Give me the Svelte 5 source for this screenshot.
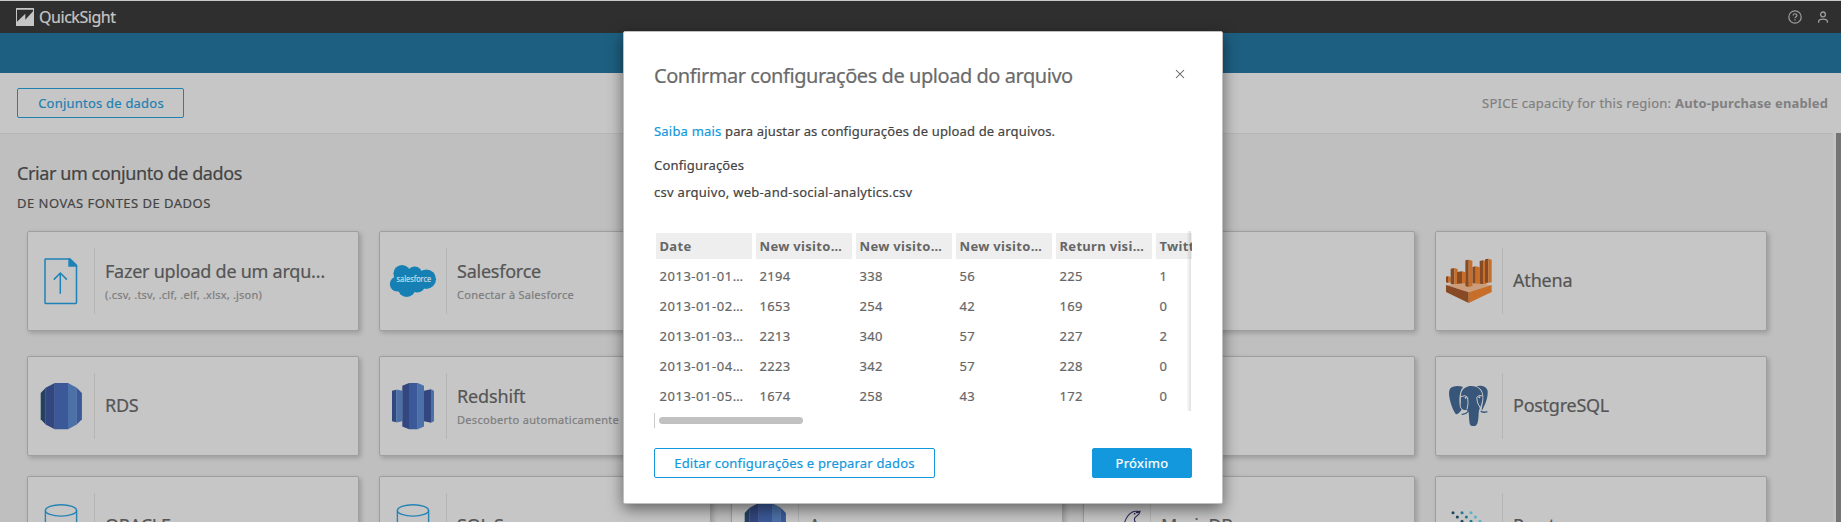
<script>
  const sources = [
    { name: 'Fazer upload de um arqu…', sub: '(.csv, .tsv, .clf, .elf, .xlsx, .json)', icon: 'upload', ls: -0.245, subLs: 0.21 },
    { name: 'Salesforce', sub: 'Conectar à Salesforce', icon: 'salesforce', ls: -0.24, subLs: 0.275 },
    { name: '' },
    { name: '' },
    { name: 'Athena', icon: 'athena', ls: -0.17 },
    { name: 'RDS', icon: 'rds', ls: -0.24 },
    { name: 'Redshift', sub: 'Descoberto automaticamente', icon: 'redshift', ls: -0.13, subLs: 0.3 },
    { name: '' },
    { name: '' },
    { name: 'PostgreSQL', icon: 'postgres', ls: -0.26 },
    { name: 'ORACLE', icon: 'database', ls: -0.24 },
    { name: 'SQL Server', icon: 'database', ls: -0.24 },
    { name: 'Aurora', icon: 'rds', ls: -0.24 },
    { name: 'MariaDB', icon: 'mariadb', ls: -0.24 },
    { name: 'Presto', icon: 'presto', ls: -0.24 }
  ];

  const columns = ['Date', 'New visito…', 'New visito…', 'New visito…', 'Return visi…', 'Twitter'];
  const rows = [
    ['2013-01-01…', '2194', '338', '56', '225', '1'],
    ['2013-01-02…', '1653', '254', '42', '169', '0'],
    ['2013-01-03…', '2213', '340', '57', '227', '2'],
    ['2013-01-04…', '2223', '342', '57', '228', '0'],
    ['2013-01-05…', '1674', '258', '43', '172', '0']
  ];

  const dots = [
    [700, 878, '#1e4560'], [727, 878, '#1a7a92'], [754, 878, '#5bb0c6'],
    [713, 891, '#1e4560'], [740, 891, '#1a7a92'], [767, 891, '#5bb0c6'],
    [727, 904, '#1e4560'], [754, 904, '#1a7a92'], [781, 904, '#5bb0c6']
  ];

  // x start, dark/light split, x end, top, bottom
  const bars = [
    [679, 685, 693, 168, 187],
    [693, 704, 714, 144, 192],
    [712, 727, 737, 154, 196],
    [758, 768, 780, 139, 195],
    [737, 747, 758, 119, 200],
    [780, 790, 802, 121, 191],
    [796, 806, 816, 116, 187]
  ];
</script>

<div class="page">
  <header class="top">
    <svg class="logo" viewBox="0 0 54 54">
      <rect width="54" height="54" rx="1.5" fill="#c6c6c6" />
      <path d="M3 5.5H51V10L28 35V17L3 41Z" fill="#2f2f2f" />
    </svg>
    <span class="brand">QuickSight</span>
    <div class="tools">
      <svg width="16" height="16" viewBox="0 0 16 16" fill="none" stroke="#9c9c9c" stroke-width="1.2">
        <circle cx="8" cy="8" r="6.2" />
        <path d="M6.1 6.5C6.1 4.2 9.9 4.2 9.9 6.4C9.9 7.7 8 7.7 8 9.2M8 10.2V11.4" />
      </svg>
      <svg width="16" height="16" viewBox="0 0 16 16" fill="none" stroke="#9c9c9c" stroke-width="1.3">
        <circle cx="8" cy="5.4" r="2.4" />
        <path d="M3.6 13.8V12.6C3.6 9.3 12.4 9.3 12.4 12.6V13.8" />
      </svg>
    </div>
  </header>
  <div class="band"></div>
  <div class="toolbar">
    <button class="outline muted">Conjuntos de dados</button>
    <div class="capacity"><span>SPICE capacity for this region:</span> <b>Auto-purchase enabled</b></div>
  </div>
  <div class="body">
    <main>
      <h1>Criar um conjunto de dados</h1>
      <h2>DE NOVAS FONTES DE DADOS</h2>
      <div class="grid">
        {#each sources as s}
          <div class="card">
            <svg class="icon" width="66" height="98" viewBox="1 1 66 98">
              {#if s.icon === 'upload'}
                <g fill="none" stroke="#1f82b6" stroke-width="1.5">
                  <path d="M43.5 28H18.6Q18 28 18 28.6V71.4Q18 72.6 19 72.6H48.6Q49.5 72.6 49.5 71.6V34" />
                  <path d="M33.3 62.8V42M26.8 48.6L33.3 42L39.9 48.6" />
                </g>
                <path d="M41.3 27.4H43.6L50.1 33.7V35.7H41.3Z" fill="#1f82b6" />
              {:else if s.icon === 'salesforce'}
                <g fill="#1680b4">
                  <circle cx="23" cy="42.5" r="8.6" /><circle cx="35.7" cy="43" r="7.6" />
                  <circle cx="47.3" cy="48.2" r="9.7" /><circle cx="18.2" cy="53" r="7.4" />
                  <circle cx="27.7" cy="57" r="9" /><circle cx="38" cy="53.4" r="8.2" />
                  <rect x="18" y="42" width="28" height="15" />
                </g>
                <text x="17.6" y="51" font-size="8.6" textLength="34.5" lengthAdjust="spacingAndGlyphs" fill="#c6dde6" stroke="#c6dde6" stroke-width="0.2">salesforce</text>
              {:else if s.icon === 'athena'}
                <g transform="translate(-215.3 -11) scale(.33333)">
                  {#each bars as [x0, xm, x1, t, b]}
                    <path d="M{x0} {t + 2}L{xm} {t}V{b + 2}L{x0} {b}Z" fill="#884a24" />
                    <path d="M{xm} {t}L{x1} {t + 3}V{b}L{xm} {b + 2}Z" fill="#c76f29" />
                  {/each}
                  <path d="M679 195L747 188L816 195L747 217Z" fill="#cb9d7a" />
                  <path d="M737 186H747V201L737 198Z" fill="#884a24" />
                  <path d="M747 186H758V198L747 201Z" fill="#c76f29" />
                  <path d="M679 195L747 217V249L679 216Z" fill="#884a24" />
                  <path d="M816 195L747 217V249L816 216Z" fill="#c76f29" />
                </g>
              {:else if s.icon === 'rds'}
                <path d="M13.7 37L18.7 31.7V68.6L13.7 63.3Z" fill="#264060" />
                <path d="M18.6 31.8L27.8 27V73.3L18.6 68.5Z" fill="#32477f" />
                <path d="M27.7 27H41.1V73.3H27.7Z" fill="#3b5998" />
                <path d="M41 27L49.8 31.8V68.5L41 73.3Z" fill="#4c71a8" />
                <path d="M49.7 31.7L54.9 37V63.3L49.7 68.6Z" fill="#3b5998" />
              {:else if s.icon === 'redshift'}
                <path d="M13 34.7L17.4 33.7V66.3L13 65.3Z" fill="#32477f" />
                <path d="M17.3 33.5L23.4 34.7V65.3L17.3 66.5Z" fill="#4c71a8" />
                <path d="M45 34.7L52 33.2V66.8L45 65.3Z" fill="#32477f" />
                <path d="M52 33.2L55 34.7V65.3L52 66.8Z" fill="#4c71a8" />
                <path d="M23.3 29.7L30.1 27V73.3L23.3 70.6Z" fill="#32477f" />
                <path d="M30 27H38.7V73.3H30Z" fill="#3b5998" />
                <path d="M38.6 27L45 29.7V70.6L38.6 73.3Z" fill="#4c71a8" />
              {:else if s.icon === 'postgres'}
                <g transform="translate(-215.3 -136) scale(.33333)" fill="#375679">
                  <path d="M700 500C712 496 722 498 730 501C719 513 717 540 721 562L726 569C719 578 712 585 708 582C698 570 688 537 688 520C688 508 692 502 700 500Z" />
                  <path d="M724 524C726 500 752 494 768 500C788 507 792 530 786 548C784 558 778 566 777 578C776 596 776 611 768 617C760 620 751 618 750 611C748 600 748 588 747 577L741 569C732 572 725 568 723 558Z" />
                  <path d="M770 499C787 494 802 501 804 514C805 535 796 555 786 573C785 558 794 545 790 522C787 509 780 503 770 499Z" />
                  <path d="M724 530Q737 523 744 532Q747 552 742 568M789 528Q778 522 771 532Q770 548 784 568" fill="none" stroke="#c6c6c6" stroke-width="3" />
                  <path d="M726 583Q737 584 746 574M783 574Q790 579 803 575" fill="none" stroke="#375679" stroke-width="4" />
                  <circle cx="738" cy="533" r="3" fill="#c6c6c6" /><circle cx="779" cy="532" r="3" fill="#c6c6c6" />
                </g>
              {:else if s.icon === 'database'}
                <g fill="none" stroke="#2684b5" stroke-width="1.4">
                  <ellipse cx="34" cy="34.4" rx="15.6" ry="5.7" />
                  <path d="M18.4 34.4V68C18.4 75.5 49.6 75.5 49.6 68V34.4" />
                </g>
              {:else if s.icon === 'mariadb'}
                <g transform="translate(17 -6) scale(.33333)">
                  <path d="M73 160C77 145 88 130 99 125C108 122 116 126 120 124C121 132 110 137 105 143C101 149 103 154 110 161" fill="none" stroke="#2e2a5a" stroke-width="3.4" />
                  <circle cx="104" cy="131" r="2.6" fill="#2e2a5a" />
                  <path d="M108 128L119 126" stroke="#2e2a5a" stroke-width="4" />
                </g>
              {:else if s.icon === 'presto'}
                <g transform="translate(-215.3 -256) scale(.33333)">
                  {#each dots as [x, y, c]}<circle cx={x} cy={y} r="4.6" fill={c} />{/each}
                </g>
              {/if}
            </svg>
            <div class="rule"></div>
            <div class="label" class:double={s.sub}>
              <span class="name" style="letter-spacing:{s.ls ?? 0}px">{s.name}</span>
              {#if s.sub}<span class="sub" style="letter-spacing:{s.subLs}px">{s.sub}</span>{/if}
            </div>
          </div>
        {/each}
      </div>
    </main>
    <div class="track"></div>
    <div class="thumb"></div>
  </div>

  <section class="modal">
    <div class="head">
      <h3>Confirmar configurações de upload do arquivo</h3>
      <svg width="10" height="10" viewBox="0 0 10 10" stroke="#5c5c5c" stroke-width="1.05"><path d="M1 1L9 9M9 1L1 9" /></svg>
    </div>
    <p class="learn"><span class="link">Saiba mais</span> <span>para ajustar as configurações de upload de arquivos.</span></p>
    <p class="conf">Configurações</p>
    <p class="file">csv arquivo, web-and-social-analytics.csv</p>
    <div class="preview">
      <div class="table">
        {#each columns as c}<div class="th">{c}</div>{/each}
        {#each rows as r}
          {#each r as v, i}<div class="td" class:date={i === 0}>{v}</div>{/each}
        {/each}
      </div>
      <div class="edge"></div>
    </div>
    <div class="hscroll"><div class="grip"></div></div>
    <div class="actions">
      <button class="outline edit">Editar configurações e preparar dados</button>
      <button class="primary">Próximo</button>
    </div>
  </section>
</div>

<style>
  :global(body) { overflow: hidden; background: #bfbfbf; }
  .page {
    position: relative; width: 1841px; height: 522px; overflow: hidden; box-sizing: border-box;
    border-top: 1px solid #c8c8c8; display: flex; flex-direction: column; background: #bfbfbf;
    font-family: "Noto Sans", "Open Sans", sans-serif; font-size: 13px; color: #444;
    -webkit-text-stroke: 0.2px;
  }
  h1, h2, h3, p { margin: 0; font-weight: 400; white-space: nowrap; }
  button { font: inherit; box-sizing: border-box; height: 30px; padding: 0; border-radius: 2px; line-height: 28px; white-space: nowrap; }
  b, .th { -webkit-text-stroke: 0; }
  .top { height: 32px; flex: none; background: #2f2f2f; display: flex; align-items: center; padding: 0 10px 0 16px; }
  .logo { width: 18px; height: 18px; }
  .brand { margin-left: 5px; font-size: 16px; letter-spacing: -0.46px; color: #c6c6c6; }
  .tools { margin-left: auto; display: flex; gap: 12px; }
  .band { height: 40px; flex: none; background: #1d5f80; }
  .toolbar {
    height: 60px; flex: none; background: #c6c6c6; display: flex; align-items: center; justify-content: space-between;
    padding: 0 13px 0 17px;
  }
  .outline { background: transparent; border: 1px solid #1398dd; color: #1398dd; }
  .muted { width: 167px; padding-left: 1px; border-color: #1f80b2; color: #1f80b2; letter-spacing: 0.22px; }
  .capacity { color: #808080; letter-spacing: 0.26px; }
  .capacity b { letter-spacing: 0.13px; }
  .body { flex: 1; min-height: 0; display: flex; box-shadow: inset 0 1px 1px #b6b6b6; }
  main { flex: 1; min-width: 0; padding-top: 27px; }
  h1 { padding-left: 17px; font-size: 18px; line-height: 26px; letter-spacing: -0.41px; }
  h2 { padding-left: 17px; margin-top: 7px; font-size: 13px; line-height: 20px; letter-spacing: 0.48px; }
  .grid {
    display: grid; grid-template-columns: repeat(5, 332px); grid-template-rows: 105px 100px 100px;
    gap: 20px; padding: 18px 0 0 27px;
  }
  .card {
    box-sizing: border-box; width: 332px; height: 100px; background: #c6c6c6; border: 1px solid #9f9f9f;
    border-radius: 2px; box-shadow: 2px 2px 5px rgba(0, 0, 0, 0.2); display: flex; overflow: hidden;
  }
  .icon { flex: none; }
  .rule { width: 1px; height: 66px; margin-top: 16px; background: #b5b5b5; }
  .label { padding: 36px 0 0 10px; display: flex; flex-direction: column; white-space: nowrap; }
  .label.double { padding-top: 27px; }
  .name { font-size: 18px; line-height: 24px; color: #555; }
  .sub { font-size: 11px; line-height: 24px; color: #7d7d7d; }
  .track { width: 3px; background: #c5c5c5; }
  .thumb { width: 5px; background: #747474; }

  .modal {
    position: absolute; left: 623px; top: 30px; width: 600px; height: 473px; box-sizing: border-box;
    background: #fff; border: 1px solid #c0c0c0; border-radius: 2px; box-shadow: 0 5px 15px rgba(0, 0, 0, 0.5);
    padding: 29px 30px 0; display: flex; flex-direction: column;
  }
  .head { display: flex; height: 30px; justify-content: space-between; }
  .head svg { margin: 8px 7px 0 0; }
  h3 { font-size: 20px; line-height: 30px; letter-spacing: -0.45px; color: #6a6a6a; }
  .modal p { line-height: 20px; letter-spacing: 0.17px; }
  .modal .learn { margin-top: 30px; letter-spacing: 0.15px; }
  .learn .link { color: #1398dd; letter-spacing: 0.2px; }
  .modal .conf { margin-top: 14px; }
  .modal .file { margin-top: 7px; letter-spacing: 0.28px; }
  .preview { position: relative; margin-top: 29px; height: 180px; width: 538px; overflow: hidden; }
  .table {
    display: grid; grid-template-columns: repeat(6, 96px); grid-auto-rows: 26px; gap: 4px;
    width: 596px; padding: 2px 0 0 2px;
  }
  .th, .td { padding-left: 3.5px; line-height: 26px; color: #666; white-space: nowrap; letter-spacing: 0.31px; }
  .th { background: #eee; font-weight: 700; }
  .date { letter-spacing: 0.53px; }
  .edge {
    position: absolute; right: 1px; top: 0; width: 4px; height: 180px;
    background: linear-gradient(90deg, rgba(0, 0, 0, 0.02), rgba(0, 0, 0, 0.12));
  }
  .hscroll { margin-top: 2px; height: 15px; flex: none; border-left: 1px solid #ccc; padding: 4px 0 0 4px; box-sizing: border-box; }
  .grip { width: 144px; height: 7px; border-radius: 4px; background: #c1c1c1; }
  .actions { margin-top: 20px; display: flex; justify-content: space-between; }
  .edit { width: 281px; letter-spacing: 0.183px; }
  .primary { width: 100px; border: 1px solid #1398dd; background: #1398dd; color: #fff; letter-spacing: 0.3px; }
</style>
